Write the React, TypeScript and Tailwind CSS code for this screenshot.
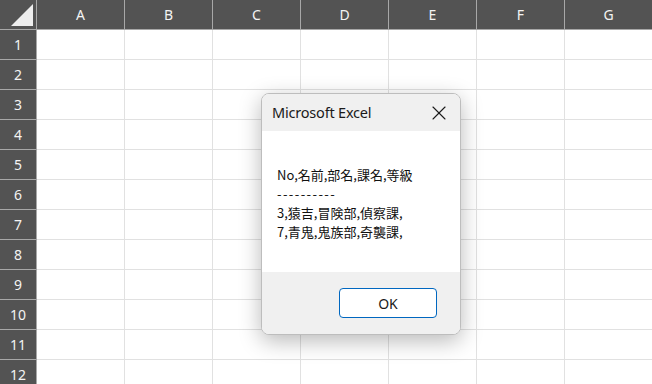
import { X } from 'lucide-react'

const cols = ['A', 'B', 'C', 'D', 'E', 'F', 'G']
const rows = [1, 2, 3, 4, 5, 6, 7, 8, 9, 10, 11, 12]

function MessageBox() {
  return (
    <div className="absolute left-[261px] top-[93px] flex h-[242px] w-[200px] flex-col overflow-hidden rounded-[8px] border border-[#bdbdbd] bg-white shadow-[0_6px_22px_rgba(0,0,0,0.28)]">
      <div className="flex h-[37px] shrink-0 items-center justify-between bg-[#f0f0f0] pl-[10px] pr-[9px]">
        <span className="text-[14.5px] tracking-[-0.2px] text-[#1a1a1a]" style={{ fontFamily: '"Noto Sans", sans-serif' }}>
          Microsoft Excel
        </span>
        <X className="h-[24px] w-[24px] text-[#1a1a1a]" strokeWidth={1.1} />
      </div>
      <div
        className="flex-1 bg-white pl-[15px] pt-[34px] text-[13px] leading-[19px] text-[#111]"
        style={{ fontFamily: '"Noto Sans CJK JP", sans-serif' }}
      >
        <div>No,名前,部名,課名,等級</div>
        <div className="tracking-[1.4px]">----------</div>
        <div>3,猿吉,冒険部,偵察課,</div>
        <div>7,青鬼,鬼族部,奇襲課,</div>
      </div>
      <div className="flex h-[62px] shrink-0 items-start justify-end bg-[#f0f0f0] pr-[23px] pt-[16px]">
        <button
          type="button"
          className="flex h-[30px] w-[98px] items-center justify-center rounded-[4px] border border-[#0067c0] bg-white text-[14px] text-[#1a1a1a]"
          style={{ fontFamily: '"Noto Sans", sans-serif' }}
        >
          OK
        </button>
      </div>
    </div>
  )
}

export default function App() {
  return (
    <div className="relative h-[384px] w-[652px] overflow-hidden bg-white" style={{ fontFamily: '"Noto Sans", sans-serif' }}>
      <div className="flex h-[30px] bg-[#535353]">
        <div className="relative h-[30px] w-[37px] shrink-0 border-b border-r border-[#a8a8a8]">
          <svg className="absolute left-[11px] top-[4px]" width="22" height="22" viewBox="0 0 22 22">
            <polygon points="22,0 22,22 0,22" fill="#eeeeee" />
          </svg>
        </div>
        {cols.map((c) => (
          <div
            key={c}
            className="flex h-[30px] w-[88px] shrink-0 items-center justify-center border-b border-r border-[#a8a8a8] text-[14px] text-[#f4f4f4]"
          >
            {c}
          </div>
        ))}
      </div>
      {rows.map((r) => (
        <div key={r} className="flex h-[30px]">
          <div className="flex h-[30px] w-[37px] shrink-0 items-center justify-center border-b border-r border-[#a8a8a8] bg-[#535353] text-[14px] text-[#f4f4f4]">
            {r}
          </div>
          {cols.map((c) => (
            <div key={c} className="h-[30px] w-[88px] shrink-0 border-b border-r border-[#e1e1e1]" />
          ))}
        </div>
      ))}
      <MessageBox />
    </div>
  )
}
